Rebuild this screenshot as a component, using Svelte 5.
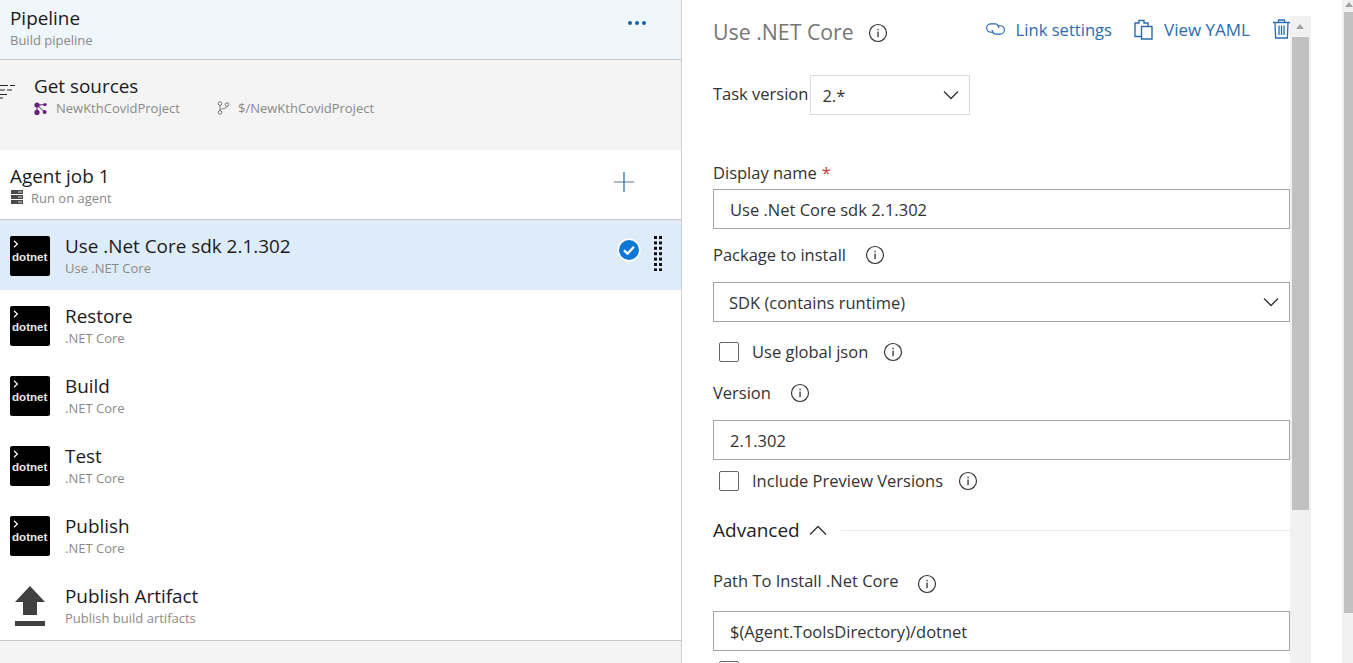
<script>
  const tasks = [
    { name: 'Use .Net Core sdk 2.1.302', sub: 'Use .NET Core', selected: true },
    { name: 'Restore', sub: '.NET Core' },
    { name: 'Build', sub: '.NET Core' },
    { name: 'Test', sub: '.NET Core' },
    { name: 'Publish', sub: '.NET Core' }
  ];
  const gripRows = [0, 1, 2, 3, 4, 5, 6];
</script>

{#snippet info()}
  <svg class="info" width="20" height="20" viewBox="0 0 20 20" aria-hidden="true">
    <circle cx="10" cy="10" r="8.5" fill="none" stroke="#333" stroke-width="1.2" />
    <rect x="9.4" y="8.6" width="1.3" height="5.6" fill="#333" />
    <rect x="9.4" y="5.8" width="1.3" height="1.5" fill="#333" />
  </svg>
{/snippet}

{#snippet chevron()}
  <svg width="16" height="10" viewBox="0 0 16 10" aria-hidden="true">
    <path d="M1 1.5 L8 8.5 L15 1.5" fill="none" stroke="#333" stroke-width="1.3" />
  </svg>
{/snippet}

<div class="page">
  <section class="left">
    <header class="pipeline">
      <div>
        <div class="title">Pipeline</div>
        <div class="sub">Build pipeline</div>
      </div>
      <div class="dots" aria-label="More"><i></i><i></i><i></i></div>
    </header>

    <div class="sources">
      <svg class="lines" width="16" height="16" viewBox="0 0 16 16" aria-hidden="true">
        <path d="M-1 1.5H8M10 1.5H15M-1 6H5M7 6H12M-1 10.5H7M-1 14H3" fill="none" stroke="#222" stroke-width="1.2" />
      </svg>
      <div class="sources-text">
        <div class="title">Get sources</div>
        <div class="meta">
          <span class="meta-item">
            <svg width="13" height="13" viewBox="0 0 13 13" aria-hidden="true">
              <path d="M3 3L10.6 10M3 10.6L3 3M3 3L11 2.6" stroke="#68217a" stroke-width="1" />
              <g fill="#68217a">
                <circle cx="3" cy="3" r="2.6" /><circle cx="11" cy="2.6" r="1.7" /><circle cx="3" cy="10.4" r="2.6" /><circle cx="10.6" cy="10" r="2" />
              </g>
            </svg>
            NewKthCovidProject
          </span>
          <span class="meta-item second">
            <svg width="13" height="14" viewBox="0 0 13 14" aria-hidden="true">
              <g fill="none" stroke="#777" stroke-width="1">
                <circle cx="3" cy="2.6" r="1.8" /><circle cx="3" cy="11.4" r="1.8" /><circle cx="10" cy="3.6" r="1.8" />
                <path d="M3 4.4V9.6M10 5.4C10 8 3.4 7 3 9.6" />
              </g>
            </svg>
            $/NewKthCovidProject
          </span>
        </div>
      </div>
    </div>

    <div class="agent">
      <div>
        <div class="title">Agent job 1</div>
        <div class="agent-sub">
          <svg width="12" height="14" viewBox="0 0 12 14" aria-hidden="true">
            <path d="M0 0H12V4H0ZM0 5H12V9H0ZM0 10H12V14H0Z" fill="#4a4a4a" />
            <path d="M7 2H11M7 7H11M7 12H11" stroke="#fff" stroke-width="0.8" />
          </svg>
          <span class="sub">Run on agent</span>
        </div>
      </div>
      <svg class="plus" width="20" height="20" viewBox="0 0 20 20" aria-hidden="true">
        <path d="M0 10H20" stroke="#7c8ba0" stroke-width="1.2" />
        <path d="M10 0V20" stroke="#106ebe" stroke-width="1.2" />
      </svg>
    </div>

    {#each tasks as t}
      <div class="task" class:selected={t.selected}>
        <div class="dotnet">
          <svg class="prompt" width="6" height="8" viewBox="0 0 6 8" aria-hidden="true">
            <path d="M1 .8L4.4 4L1 7.2" fill="none" stroke="#fff" stroke-width="1.2" />
          </svg>
          <span>dotnet</span>
        </div>
        <div class="task-text">
          <div class="title">{t.name}</div>
          <div class="sub">{t.sub}</div>
        </div>
        {#if t.selected}
          <svg class="check" width="24" height="24" viewBox="0 0 24 24" aria-hidden="true">
            <circle cx="12" cy="12" r="11.5" fill="#fff" />
            <circle cx="12" cy="12" r="10" fill="#0f78d4" />
            <path d="M7 12.4L10.6 15.6L17 8.8" fill="none" stroke="#fff" stroke-width="2.4" />
          </svg>
          <svg class="grip" width="10" height="36" viewBox="0 0 10 36" aria-hidden="true">
            {#each gripRows as r}
              <rect x="1" y={1 + r * 5.4} width="3" height="3" fill="#111" />
              <rect x="6" y={1 + r * 5.4} width="3" height="3" fill="#111" />
            {/each}
          </svg>
        {/if}
      </div>
    {/each}

    <div class="task">
      <svg class="upload" width="40" height="41" viewBox="0 0 40 41" aria-hidden="true">
        <path d="M20 1L35 17H27V30H13V17H5Z" fill="#404040" />
        <rect x="5" y="36" width="30" height="5" fill="#404040" />
      </svg>
      <div class="task-text">
        <div class="title">Publish Artifact</div>
        <div class="sub">Publish build artifacts</div>
      </div>
    </div>
    <div class="left-foot"></div>
  </section>

  <section class="right">
    <div class="form">
      <div class="head">
        <h1>Use .NET Core</h1>
        {@render info()}
        <div class="actions">
          <a class="link first">
            <svg width="21" height="14" viewBox="0 0 22 15" aria-hidden="true">
              <g fill="none" stroke="#2b6cb0" stroke-width="1.3">
                <path d="M9 11H6A4.5 4.5 0 0 1 6 2H11A4 4 0 0 1 14.5 6.5" />
                <path d="M13 4H16A4.5 4.5 0 0 1 16 13H11A4 4 0 0 1 7.5 8.5" />
              </g>
            </svg>
            Link settings
          </a>
          <a class="link">
            <svg width="19" height="21" viewBox="0 0 19 21" aria-hidden="true">
              <g fill="none" stroke="#2b6cb0" stroke-width="1.4">
                <path d="M7 17.5H1V4H5V1.5H10V4H14V7" />
                <path d="M7.5 7.5H18V20H7.5Z" />
              </g>
            </svg>
            View YAML
          </a>
          <svg class="trash" width="17" height="20" viewBox="0 0 17 20" aria-hidden="true">
            <g fill="none" stroke="#2b6cb0" stroke-width="1.3">
              <path d="M0 3.5H17M5.5 3.5V1H11.5V3.5M2 3.5L2.6 19H14.4L15 3.5" />
              <path d="M6 6.5V16M8.5 6.5V16M11 6.5V16" />
            </g>
          </svg>
        </div>
      </div>

      <div class="version-row">
        <label for="tv">Task version</label>
        <div class="select light" id="tv"><span>2.*</span>{@render chevron()}</div>
      </div>

      <div class="label display">Display name <span class="req">*</span></div>
      <div class="input">Use .Net Core sdk 2.1.302</div>

      <div class="label pkg">Package to install {@render info()}</div>
      <div class="select"><span>SDK (contains runtime)</span>{@render chevron()}</div>

      <div class="check-row global"><i class="box"></i>Use global json {@render info()}</div>

      <div class="label ver">Version {@render info()}</div>
      <div class="input">2.1.302</div>

      <div class="check-row preview"><i class="box"></i>Include Preview Versions {@render info()}</div>

      <div class="advanced">
        <span>Advanced</span>
        <svg width="18" height="11" viewBox="0 0 18 11" aria-hidden="true">
          <path d="M1 9.5L9 1.5L17 9.5" fill="none" stroke="#333" stroke-width="1.4" />
        </svg>
        <div class="rule"></div>
      </div>

      <div class="label path">Path To Install .Net Core {@render info()}</div>
      <div class="input">$(Agent.ToolsDirectory)/dotnet</div>
      <i class="box last"></i>
    </div>

    <div class="scroll inner">
      <div class="arrow"></div>
      <div class="thumb"></div>
    </div>
    <div class="scroll outer">
      <div class="arrow small"></div>
      <div class="thumb"></div>
    </div>
  </section>
</div>

<style>
  :global(body) {
    margin: 0;
    background: #fff;
  }
  .page {
    display: flex;
    width: 1353px;
    height: 663px;
    overflow: hidden;
    font-family: "Open Sans", "Noto Sans", sans-serif;
    color: #212121;
  }
  .left {
    width: 681px;
    flex: none;
    border-right: 1px solid #d0d0d0;
    display: flex;
    flex-direction: column;
  }
  .title {
    font-size: 18.9px;
    line-height: 24px;
    color: #1b1b1b;
  }
  .sub, .meta {
    font-size: 13px;
    line-height: 16px;
    color: #8a8a8a;
  }
  .pipeline {
    flex: none;
    background: #eff6fc;
    border-bottom: 1px solid #c8c8c8;
    display: flex;
    justify-content: space-between;
    padding: 6px 35px 0 10px;
    height: 53px;
  }
  .pipeline .sub { margin-top: 2px; }
  .dots {
    display: flex;
    gap: 3px;
    margin-top: 15px;
  }
  .dots i {
    width: 4px;
    height: 4px;
    border-radius: 50%;
    background: #1d5fa5;
  }
  .sources {
    height: 90px;
    flex: none;
    box-sizing: border-box;
    background: #f4f4f4;
    display: flex;
    padding: 14px 0 0 0;
  }
  .lines { margin: 10px 18px 0 0; }
  .meta {
    display: flex;
    margin-top: 2px;
  }
  .meta-item {
    display: flex;
    align-items: center;
    gap: 9px;
    width: 183px;
  }
  .meta-item.second { gap: 8px; }
  .agent {
    height: 69px;
    flex: none;
    border-bottom: 1px solid #c8c8c8;
    display: flex;
    justify-content: space-between;
    padding: 0 47px 0 10px;
  }
  .agent > div { padding-top: 14px; }
  .agent-sub {
    display: flex;
    align-items: center;
    gap: 9px;
    margin-top: 2px;
    padding-left: 1px;
  }
  .agent-sub svg { margin-top: -2px; margin-right: -1px; }
  .plus { margin-top: 22px; }
  .task {
    height: 70px;
    flex: none;
    display: flex;
    align-items: center;
    padding: 0 18px 0 10px;
    box-sizing: border-box;
  }
  .task.selected { background: #deecf9; }
  .task-text {
    flex: 1;
    margin-left: 15px;
    padding-bottom: 1px;
  }
  .task-text .sub { margin-top: 2px; }
  .dotnet {
    width: 40px;
    height: 40px;
    margin-top: 2px;
    flex: none;
    background: #000;
    border-radius: 2px;
    display: flex;
    flex-direction: column;
    align-items: flex-start;
    box-sizing: border-box;
    padding: 4px 0 0 2px;
    color: #e8e8e8;
    font-family: "Liberation Sans", sans-serif;
    font-weight: 700;
    font-size: 11.6px;
    line-height: 13px;
  }
  .prompt { margin: 0 0 2px 1px; }
  .check { margin-right: 2px; margin-bottom: 11px; }
  .grip { margin-left: 10px; margin-bottom: 4px; }
  .left-foot {
    flex: 1;
    background: #f4f4f4;
    border-top: 1px solid #c8c8c8;
  }
  .right {
    flex: 1;
    display: flex;
    min-width: 0;
  }
  .form {
    width: 608px;
    flex: none;
    box-sizing: border-box;
    padding-left: 31px;
    overflow: hidden;
    font-size: 16.5px;
    color: #333;
  }
  .head {
    height: 65px;
    display: flex;
    align-items: flex-start;
  }
  h1 {
    margin: 18px 14px 0 0;
    font-size: 21.3px;
    line-height: 28px;
    font-weight: 400;
    color: #767676;
  }
  .head > .info { margin-top: 23px; }
  .actions {
    margin-left: auto;
    display: flex;
    align-items: center;
    margin-top: 19px;
    height: 20px;
  }
  .link {
    display: flex;
    align-items: center;
    gap: 10px;
    color: #2b6cb0;
    font-size: 16.6px;
    margin-right: 23px;
  }
  .link:not(.first) { font-size: 17px; gap: 11px; }
  .first { margin-right: 22px; }
  .version-row {
    display: flex;
    align-items: center;
    gap: 2px;
    margin-top: 10px;
    height: 40px;
  }
  .version-row label { line-height: 38px; padding-bottom: 2px; }
  .select, .input {
    height: 40px;
    box-sizing: border-box;
    width: 577px;
    border: 1px solid #a6a6a6;
    padding: 0 10px 0 15px;
    display: flex;
    align-items: center;
    justify-content: space-between;
    background: #fff;
    color: #333;
  }
  .input { padding-left: 16px; }
  .select.light {
    width: 160px;
    border-color: #dcdcdc;
    padding-left: 11px;
    padding-right: 10px;
  }
  .label {
    display: flex;
    align-items: center;
    gap: 19px;
    height: 24px;
  }
  .label .info, .check-row .info { flex: none; margin-top: 1px; }
  .display { margin-top: 45px; margin-bottom: 5px; gap: 5px; }
  .req { color: #c8372d; }
  .pkg { margin-top: 13px; margin-bottom: 16px; }
  .check-row {
    display: flex;
    align-items: center;
    gap: 10px;
    height: 24px;
    margin-left: 6px;
  }
  .check-row .info { margin-left: 5px; }
  .box {
    display: block;
    width: 20px;
    height: 20px;
    flex: none;
    box-sizing: border-box;
    border: 1px solid #666;
    border-radius: 2px;
    margin-right: 3px;
    margin-top: 2px;
    background: #fff;
  }
  .global { margin-top: 17px; }
  .ver { margin-top: 17px; margin-bottom: 16px; }
  .preview { margin-top: 8px; }
  .advanced {
    display: flex;
    align-items: center;
    margin-top: 24px;
    height: 28px;
    font-size: 19px;
    color: #222;
    gap: 9px;
  }
  .rule {
    flex: 1;
    height: 1px;
    background: #ececec;
    margin-left: 5px;
  }
  .path { margin-top: 24px; margin-bottom: 19px; height: 24px; }
  .path .info { margin-top: 8px; }
  .box.last { margin: 10px 0 0 6px; }
  .scroll {
    flex: none;
    background: #f1f1f1;
    display: flex;
    flex-direction: column;
    align-items: center;
  }
  .inner {
    width: 21px;
    margin-top: 16px;
  }
  .outer {
    width: 11px;
    margin-left: 31px;
    align-items: flex-end;
  }
  .arrow {
    height: 21px;
    width: 100%;
    flex: none;
    position: relative;
  }
  .arrow::after {
    content: "";
    position: absolute;
    left: 6px;
    top: 8px;
    border-left: 4px solid transparent;
    border-right: 4px solid transparent;
    border-bottom: 5px solid #a3a3a3;
  }
  .arrow.small { height: 12px; }
  .arrow.small::after { left: 3px; top: 2px; }
  .inner .thumb {
    width: 17px;
    height: 473px;
    background: #c1c1c1;
  }
  .outer .thumb {
    width: 9px;
    height: 601px;
    background: #c1c1c1;
  }
</style>
